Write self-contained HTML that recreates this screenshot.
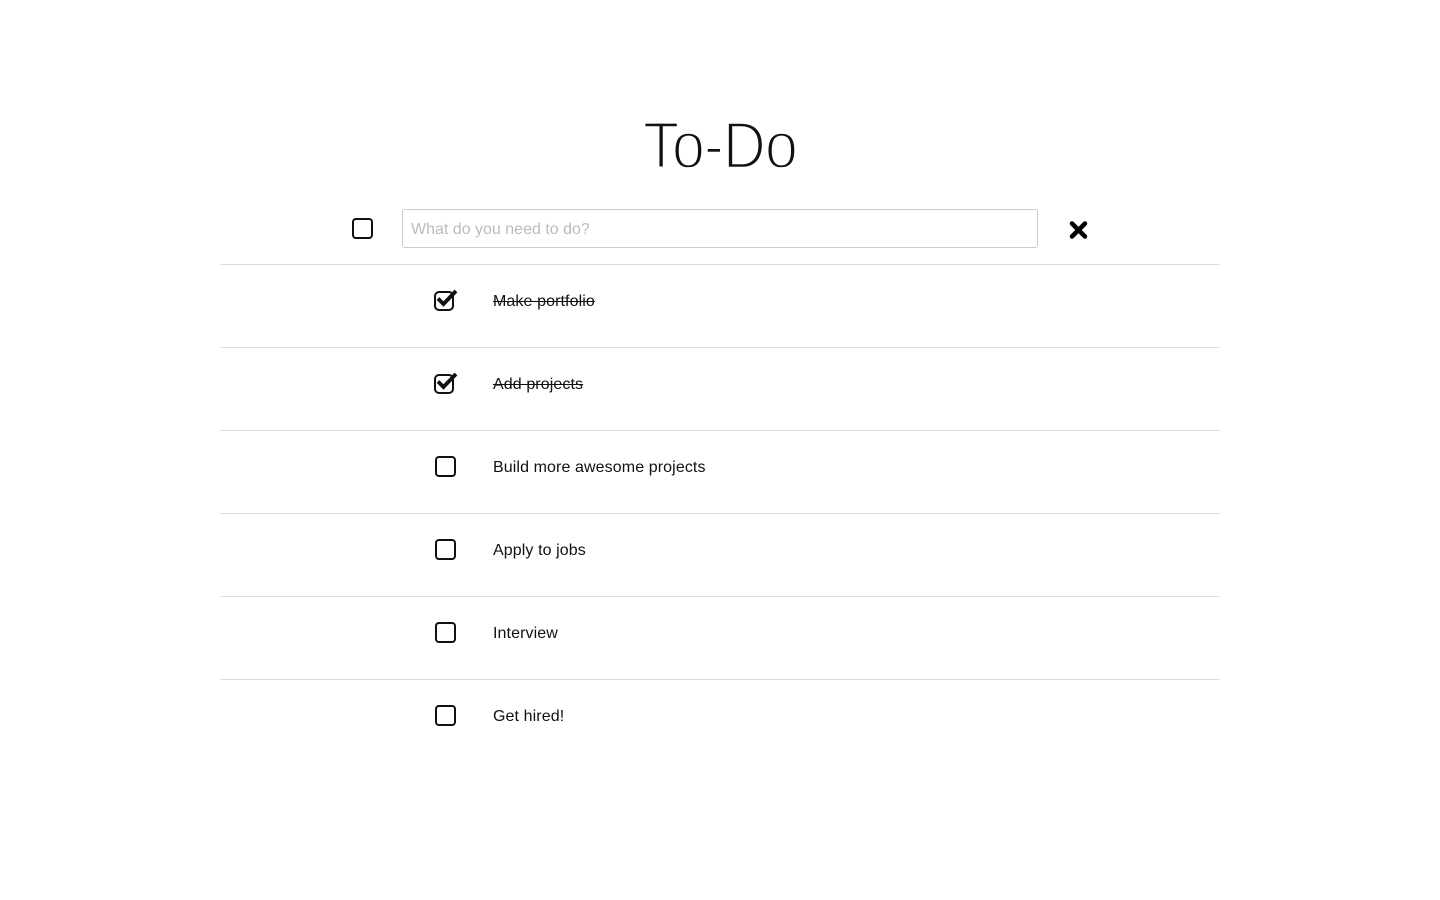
<!DOCTYPE html>
<html><head><style>
body{margin:0;background:#fff;font-family:"Liberation Sans",sans-serif;color:#111;}
h1{position:absolute;left:0;width:1440px;top:97px;margin:0;text-align:center;font-weight:normal;font-size:66px;line-height:96px;letter-spacing:-1px;color:#111;-webkit-text-stroke:2.4px #fff;paint-order:normal;transform:scaleX(0.9);}
.cb{position:absolute;width:17px;height:17px;border:2px solid #111;border-radius:4px;box-sizing:content-box;}
.inp{position:absolute;left:402px;top:209px;width:634px;height:37px;border:1px solid #ccc;border-radius:3px;}
.inp span{position:absolute;left:8px;top:11px;font-size:16px;color:#bbb;}
.line{position:absolute;left:220px;width:1000px;height:1px;background:#ddd;}
.t{position:absolute;left:493px;font-size:16px;letter-spacing:0.1px;}
.done{text-decoration:line-through;}
</style></head><body>
<h1>To-Do</h1>
<div class="cb" style="left:352px;top:218px"></div>
<div class="inp"><span>What do you need to do?</span></div>
<svg style="position:absolute;left:1069px;top:221px" width="19" height="18" viewBox="0 0 19 18"><path d="M3 2.5L16 15.5M16 2.5L3 15.5" stroke="#000" stroke-width="4.5" stroke-linecap="round"/></svg>
<div class="line" style="top:264px"></div>
<div class="line" style="top:347px"></div>
<div class="line" style="top:430px"></div>
<div class="line" style="top:513px"></div>
<div class="line" style="top:596px"></div>
<div class="line" style="top:679px"></div>

<svg style="position:absolute;left:433px;top:288px" width="28" height="24" viewBox="0 0 28 24"><rect x="2" y="4" width="18" height="18" rx="4" fill="none" stroke="#111" stroke-width="2"/><path d="M5 10.5l5.5 5.5L23 3" fill="none" stroke="#111" stroke-width="3.8"/></svg>
<div class="t done" style="top:293px">Make portfolio</div>
<svg style="position:absolute;left:433px;top:371px" width="28" height="24" viewBox="0 0 28 24"><rect x="2" y="4" width="18" height="18" rx="4" fill="none" stroke="#111" stroke-width="2"/><path d="M5 10.5l5.5 5.5L23 3" fill="none" stroke="#111" stroke-width="3.8"/></svg>
<div class="t done" style="top:376px">Add projects</div>

<div class="cb" style="left:435px;top:456px"></div>
<div class="t" style="top:459px">Build more awesome projects</div>
<div class="cb" style="left:435px;top:539px"></div>
<div class="t" style="top:542px">Apply to jobs</div>
<div class="cb" style="left:435px;top:622px"></div>
<div class="t" style="top:625px">Interview</div>
<div class="cb" style="left:435px;top:705px"></div>
<div class="t" style="top:708px">Get hired!</div>
</body></html>
